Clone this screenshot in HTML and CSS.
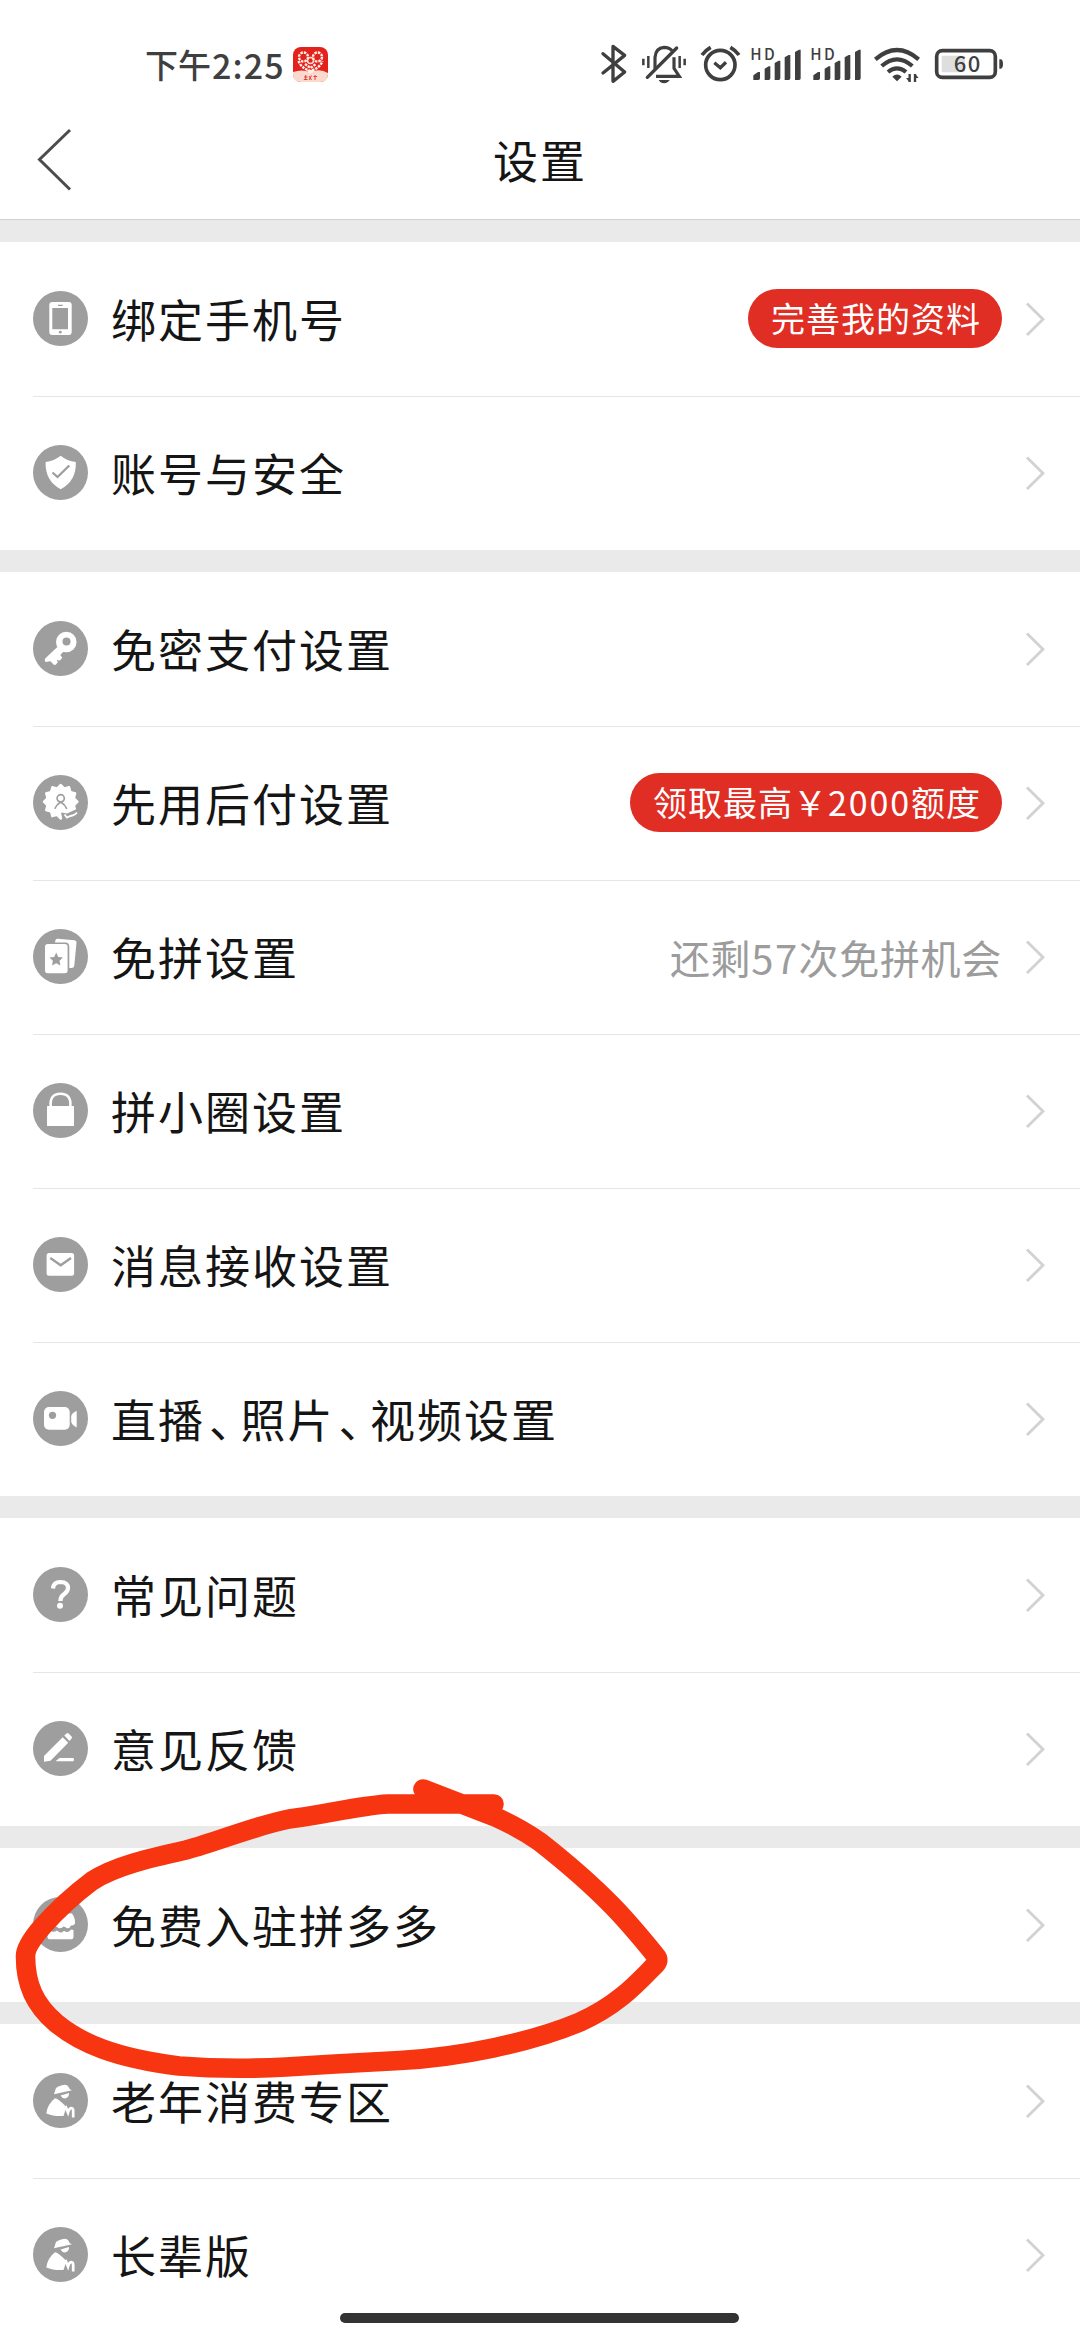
FILE: index.html
```html
<!DOCTYPE html>
<html lang="zh-CN">
<head>
<meta charset="utf-8">
<title>设置</title>
<link rel="stylesheet" href="styles.css">
</head>
<body>
<svg class="defs" width="0" height="0">
  <symbol id="chevron" viewBox="0 0 20 36"><path d="M2 2.500 18 18.300 2 34" fill="none" stroke="#d2d2d2" stroke-width="2.900"/></symbol>
  <symbol id="elder" viewBox="0 0 55 55">
    <circle class="disc" cx="27.500" cy="27.500" r="27.500"/>
    <path class="w" d="M21 21.200 22.800 15.500Q24 13.500 29 12.200Q34 11 35.300 13.500L36.800 16.200 39 17.300Z"/>
    <path class="w" d="M27.500 22.600 36 20Q36.300 24.800 32 25.400Q29 25.500 27.500 22.600Z"/>
    <path class="w" d="M22 25.300Q25 25.500 33.500 34L30.500 43Q20 43.500 13.300 40.500Q14.500 31 22 25.300Z"/>
    <path d="M29 38 33 34.500 35 39.500Q36.300 35 38.500 35Q40.200 35.200 40.200 38V44.500" fill="none" stroke="#fff" stroke-width="2.700"/>
  </symbol>
</svg>
<div class="screen">
  <div class="status">
    <div class="clock"><span class="ampm">下午</span><span class="time">2:25</span>
      <svg class="app" viewBox="0 0 35 35">
        <rect width="35" height="35" rx="8" fill="#e3221c"/>
        <path d="M0 25Q9 22 17 25Q27 21 35 26V27Q35 35 27 35H8Q0 35 0 27Z" fill="#fbd9cf"/>
        <g fill="none" stroke="#fff0e8" stroke-width="2.400" stroke-dasharray="2.500 1">
          <circle cx="10.500" cy="10" r="4.500"/><circle cx="24.500" cy="10" r="4.500"/>
          <path d="M5.500 14Q8 21 17.500 24Q27 21 29.500 14M12 17 17.500 21 23 17"/>
        </g>
        <circle cx="17.500" cy="13.500" r="3" fill="none" stroke="#ffe0d0" stroke-width="1.500"/>
        <path d="M14 23H21L19.500 26H15.500Z" fill="#fff0e8"/>
        <path d="M11 30H14.500M12.700 28V33M10.800 32.500H14.500M16 29 18.500 33M18.500 28.500 16 33M20.500 29.500H24M22 28V33" stroke="#d8463c" stroke-width="1" fill="none"/>
      </svg>
    </div>
    <div class="sys">
      <svg width="28" height="45" viewBox="60 60 84 135"><path d="M69 101 134 156 99 184V79L134 106 69 159" fill="none" stroke="#3f3f3f" stroke-width="10" stroke-linejoin="round" stroke-linecap="round"/></svg>
      <svg class="g12" width="48" height="45" viewBox="180 60 144 135"><g fill="none" stroke="#3f3f3f" stroke-width="9.500">
        <path d="M225 150V112Q227 84 252 82Q268 82 276 92" /><path d="M282 112V145L298 169H228" /><path d="M202 172 290 84" stroke-width="10" stroke-linecap="round"/>
        <path d="M190 116V136M205 108V144M314 116V136M299 108V144" stroke-width="7.500"/></g><path d="M236 180H269Q262 190 252 190Q242 190 236 180Z" fill="#3f3f3f"/></svg>
      <svg class="g12" width="41" height="45" viewBox="360 60 123 135"><g fill="none" stroke="#3f3f3f" stroke-width="11"><circle cx="421" cy="135" r="44"/><path d="M366 105Q376 91 392 82M477 105Q467 91 451 82"/><path d="M403 128 421 143 438 127" stroke-width="10"/></g></svg>
      <svg class="g9" width="52" height="45" viewBox="510 60 156 135"><g id="sig"><path fill="#3f3f3f" d="M520 180V166L534 156H540V175Q540 180 535 180ZM554 180V146L566 139H571V175Q571 180 566 180ZM584 180V129L596 122H601V175Q601 180 596 180ZM614 180V112L626 105H631V175Q631 180 626 180ZM645 180V96L657 89H662V175Q662 180 657 180Z"/><text class="hd" x="511" y="120" textLength="73">HD</text></g></svg>
      <svg class="g8" width="52" height="45" viewBox="510 60 156 135"><use href="#sig"/></svg>
      <svg class="g11" width="48" height="45" viewBox="879 60 144 135"><g fill="none" stroke="#3f3f3f" stroke-width="12.500"><path d="M886 118Q951 62 1016 118"/><path d="M905 138Q951 98 997 138"/><path d="M924 156Q951 134 978 156"/></g><path d="M937 170Q951 157 965 170L951 184Z" fill="#3f3f3f"/><path d="M989 162V186M1005 186V162" stroke="#3f3f3f" stroke-width="7"/><path d="M978 174 988 186V174ZM1016 174 1006 162V174Z" fill="#3f3f3f"/></svg>
      <svg class="g13" width="70" height="45" viewBox="1062 60 210 135"><rect x="1085" y="107" width="70" height="50" rx="5" fill="#dedede"/><rect x="1070" y="92" width="176" height="80" rx="17" fill="none" stroke="#3f3f3f" stroke-width="11"/><path d="M1258 118H1263Q1269 120 1269 132Q1269 144 1263 146H1258Z" fill="#3f3f3f"/><text class="pct" x="1161" y="157" text-anchor="middle" textLength="80">60</text></svg>
    </div>
  </div>
  <header class="nav">
    <svg class="back" width="36" height="64" viewBox="0 0 36 64"><path d="M33 2 2.500 31.500 33 61.500" fill="none" stroke="#4c4c4c" stroke-width="3"/></svg>
    <h1>设置</h1>
  </header>
  <main>
    <section class="group">
      <div class="row"><svg class="icon" viewBox="0 0 55 55"><circle class="disc" cx="27.500" cy="27.500" r="27.500"/><rect class="w" x="16.300" y="11" width="22.400" height="33" rx="3"/><path class="disc" d="M19.300 17H35V38.300H19.300ZM25 13.700H29.700V14.900H25Z"/><circle class="disc" cx="27.300" cy="41.200" r="1.400"/></svg>
        <span class="label">绑定手机号</span><span class="pill">完善我的资料</span><svg class="chev"><use href="#chevron"/></svg></div>
      <div class="row"><svg class="icon" viewBox="0 0 55 55"><circle class="disc" cx="27.500" cy="27.500" r="27.500"/><path class="w" d="M27.700 10.800Q34 16 42.800 17Q43.500 36 27.700 44.200Q12 36 12.600 17Q21 16 27.700 10.800Z"/><path class="g" stroke-width="2.300" d="M19.500 27.500 24.500 32 36.300 20.500"/></svg>
        <span class="label">账号与安全</span><svg class="chev"><use href="#chevron"/></svg></div>
    </section>
    <section class="group">
      <div class="row"><svg class="icon" viewBox="0 0 55 55"><circle class="disc" cx="27.500" cy="27.500" r="27.500"/><circle class="w" cx="33.300" cy="21" r="10.300"/><path class="w" d="M24.300 26 12.200 37.500Q11 39 12.500 41L17.500 40.300 20.500 43.500Q22 44.500 23.500 43L24.800 41 23.800 39 27 39.500 29.300 36.800 27.300 34 30.500 30.500Z"/><circle class="disc" cx="33.500" cy="20.500" r="4"/></svg>
        <span class="label">免密支付设置</span><svg class="chev"><use href="#chevron"/></svg></div>
      <div class="row"><svg class="icon" viewBox="0 0 55 55"><circle class="disc" cx="27.500" cy="27.500" r="27.500"/><g class="w"><rect id="sq" x="14.700" y="13.700" width="26" height="26" rx="1" transform="rotate(15 27.700 26.700)"/><use href="#sq" transform="rotate(30 27.700 26.700)"/><use href="#sq" transform="rotate(60 27.700 26.700)"/></g><circle class="g" stroke-width="1.700" cx="27.700" cy="23.300" r="3.600"/><path class="g" stroke-width="1.700" d="M21.800 33.800Q23.500 29.500 27.700 27Q32 29.500 33.800 33.800"/><path class="disc" d="M28 37.500 34 38.500 46 33V47H30Z"/><path d="M31.500 39.500 34 42.500Q38 40.500 39.500 40.500Q42 40 44 37.500" fill="none" stroke="#fff" stroke-width="1.900"/></svg>
        <span class="label">先用后付设置</span><span class="pill">领取最高￥<span class="num">2000</span>额度</span><svg class="chev"><use href="#chevron"/></svg></div>
      <div class="row"><svg class="icon" viewBox="0 0 55 55"><circle class="disc" cx="27.500" cy="27.500" r="27.500"/><path class="w" d="M22 13.500 22.300 11.500Q22.700 9.700 24.500 9.800L41.500 11.200Q43.700 11.500 43.500 13.500L41.300 36.500Q41 39 38.500 39H36.300V17.500Q36 13.700 32.500 13.500Z"/><rect class="w" x="12" y="15" width="22.600" height="29.300" rx="2.800"/><path class="disc" d="M23.200 23.500 25.200 28 30 28.500 26.500 31.800 27.400 36.500 23.200 34.200 19 36.500 19.900 31.800 16.400 28.500 21.200 28Z"/></svg>
        <span class="label">免拼设置</span><span class="hint">还剩<span class="num">57</span>次免拼机会</span><svg class="chev"><use href="#chevron"/></svg></div>
      <div class="row"><svg class="icon" viewBox="0 0 55 55"><circle class="disc" cx="27.500" cy="27.500" r="27.500"/><rect class="w" x="14" y="23" width="27" height="20" rx=".6"/><path d="M17.700 23.500Q16.500 10.800 27.500 10.800Q38.500 10.800 37.300 23.500" fill="none" stroke="#fff" stroke-width="2.600"/></svg>
        <span class="label">拼小圈设置</span><svg class="chev"><use href="#chevron"/></svg></div>
      <div class="row"><svg class="icon" viewBox="0 0 55 55"><circle class="disc" cx="27.500" cy="27.500" r="27.500"/><rect class="w" x="13.600" y="16" width="27.500" height="22.700" rx="2.500"/><path class="g" stroke-width="2.300" d="M17.300 21 27.700 28.300 38 21"/></svg>
        <span class="label">消息接收设置</span><svg class="chev"><use href="#chevron"/></svg></div>
      <div class="row"><svg class="icon" viewBox="0 0 55 55"><circle class="disc" cx="27.500" cy="27.500" r="27.500"/><rect class="w" x="11" y="16" width="25.700" height="22.700" rx="5"/><circle class="disc" cx="19.500" cy="24.300" r="3.600"/><path class="w" d="M43.700 19.700V36.500Q38.200 33.500 38.200 30.500V25.500Q38.200 22.500 43.700 19.700Z"/></svg>
        <span class="label">直播<span class="dun">、</span>照片<span class="dun">、</span>视频设置</span><svg class="chev"><use href="#chevron"/></svg></div>
    </section>
    <section class="group">
      <div class="row"><svg class="icon" viewBox="0 0 55 55"><circle class="disc" cx="27.500" cy="27.500" r="27.500"/><path d="M20 21.500Q20.500 15 27.500 15Q35 15.200 35 21Q35 24.500 31 27.200Q27.500 29.500 27.300 34" fill="none" stroke="#fff" stroke-width="4.200"/><circle class="w" cx="27" cy="38.700" r="3"/></svg>
        <span class="label">常见问题</span><svg class="chev"><use href="#chevron"/></svg></div>
      <div class="row"><svg class="icon" viewBox="0 0 55 55"><circle class="disc" cx="27.500" cy="27.500" r="27.500"/><path class="w" d="M29.700 16.200 35.200 21.700 17.500 39.700 11 40.700V35ZM31.300 14.500 33.500 12.400Q34.500 11.500 35.500 12.400L38.600 15.500Q39.500 16.500 38.600 17.500L36.500 19.900ZM22.500 40.300 26.500 37H40.500Q41.500 38.600 40.500 40.300Z"/></svg>
        <span class="label">意见反馈</span><svg class="chev"><use href="#chevron"/></svg></div>
    </section>
    <section class="group">
      <div class="row"><svg class="icon" viewBox="0 0 55 55"><circle class="disc" cx="27.500" cy="27.500" r="27.500"/><path class="w" d="M15 16.500H39Q42 21 42 24V26.500Q41 29 38 28.500Q36.500 32 33.500 31Q31.500 29 30.500 29.500Q28.500 32 25.500 31Q23.500 29 22.500 29.500Q20 31.500 17.500 28.500Q13 29 13 26V24Q13 20 15 16.500Z"/><path class="w" d="M14.500 33.500Q17 32 19 34.500Q21.500 35.500 24 33.500Q27 36.500 29.500 35Q31 33 33 35Q36 35.500 38 32.500L40.500 33V40Q40.500 42.300 38.300 42.300H16.500Q14.500 42.300 14.500 40Z"/></svg>
        <span class="label">免费入驻拼多多</span><svg class="chev"><use href="#chevron"/></svg></div>
    </section>
    <section class="group">
      <div class="row"><svg class="icon"><use href="#elder"/></svg><span class="label">老年消费专区</span><svg class="chev"><use href="#chevron"/></svg></div>
      <div class="row"><svg class="icon"><use href="#elder"/></svg><span class="label">长辈版</span><svg class="chev"><use href="#chevron"/></svg></div>
    </section>
  </main>
  <svg class="marker" width="680" height="310" viewBox="0 1775 680 310"><path fill="none" stroke="#f73510" stroke-width="19.600" stroke-linecap="round" stroke-linejoin="round" d="M494 1804H388C355 1806 325 1815 289 1819C254 1826 220 1841 186 1850C150 1858 115 1866 92 1881C72 1896 57 1910 42 1927Q25.500 1946 25.500 1956C25.500 1985 35 2005 56 2023C80 2043 115 2058 179 2066Q230 2070 286 2067L335 2064L400 2060.500C460 2057 530 2043 580 2022C620 2004 640 1980 656 1964Q659.500 1960 656 1956C630 1924 605 1893 540 1842Q520 1828 495.500 1817L423 1789"/></svg>
  <div class="home-bar"></div>
</div>
</body>
</html>
```
FILE: styles.css
```css
* { box-sizing: border-box; }
body {
  margin: 0;
  background: #fff;
  color: #151515;
  font-family: "Noto Sans CJK SC", "Noto Sans", sans-serif;
}
.defs { position: absolute; }
.screen {
  position: relative;
  width: 1080px;
  height: 2340px;
  overflow: hidden;
  background: #fff;
}
.status {
  display: flex;
  justify-content: space-between;
  height: 100px;
  padding: 40px 76px 0 145px;
  color: #3f3f3f;
}
.clock {
  display: flex;
  align-items: center;
  height: 48px;
  font-size: 33px;
  font-weight: 500;
  white-space: nowrap;
}
.time { margin-left: 1px; font-size: 34px; letter-spacing: 1.1px; }
.app { width: 35px; height: 35px; margin-left: 8px; }
.sys { display: flex; height: 45px; }
.g8 { margin-left: 8px; }
.g9 { margin-left: 9px; }
.g11 { margin-left: 11px; }
.g12 { margin-left: 12px; }
.g13 { margin-left: 13px; }
.hd { font: 500 46px "Noto Sans CJK SC", sans-serif; fill: #3f3f3f; }
.pct { font: 500 66px "Noto Sans CJK SC", sans-serif; fill: #3f3f3f; }
.nav {
  display: grid;
  grid-template-columns: 180px 1fr 180px;
  align-items: center;
  height: 120px;
  border-bottom: 1px solid #d2d2d2;
}
.back { margin-left: 37px; }
.nav h1 {
  margin: 0;
  font-size: 45px;
  font-weight: 400;
  line-height: 60px;
  letter-spacing: 2px;
  text-align: center;
}
main {
  display: flex;
  flex-direction: column;
  gap: 22px;
  padding-top: 22px;
  background: #eaeaea;
}
.group { padding-left: 33px; background: #fff; }
.row {
  display: flex;
  align-items: center;
  height: 154px;
  padding-right: 35px;
  padding-bottom: 1px;
}
.row + .row {
  padding-bottom: 2px;
  border-top: 1px solid #e6e6e6;
}
.icon { flex: none; width: 55px; height: 55px; }
.disc { fill: #9e9e9e; }
.w { fill: #fff; }
.g { fill: none; stroke: #9e9e9e; }
.label {
  flex: 1;
  margin-left: 23px;
  font-size: 45px;
  line-height: 60px;
  letter-spacing: 2px;
  white-space: nowrap;
}
.dun { margin-left: 4px; letter-spacing: -13.500px; }
.pill {
  height: 59px;
  padding: 0 21px 0 23px;
  border-radius: 30px;
  background: #e02e24;
  color: #fff;
  font-size: 34px;
  line-height: 58px;
  letter-spacing: 1px;
}
.pill .num { letter-spacing: 1.900px; }
.hint {
  color: #9c9c9c;
  font-size: 40px;
  line-height: 60px;
  letter-spacing: .7px;
}
.hint .num { letter-spacing: 1.400px; }
.chev { flex: none; width: 20px; height: 36px; margin-left: 23px; }
.marker { position: absolute; left: 0; top: 1775px; }
.home-bar {
  position: absolute;
  left: 340px;
  top: 2313px;
  width: 399px;
  height: 10px;
  border-radius: 5px;
  background: #333;
}
```
